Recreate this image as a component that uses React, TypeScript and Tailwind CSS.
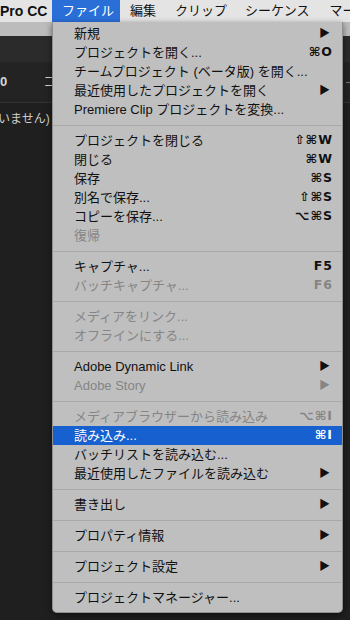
import React from 'react';

type Row =
  | { sep: true }
  | { label: string; shortcut?: string; arrow?: boolean; disabled?: boolean; active?: boolean; sep?: false };

const rows: Row[] = [
  { label: '新規', arrow: true },
  { label: 'プロジェクトを開く...', shortcut: '⌘O' },
  { label: 'チームプロジェクト (ベータ版) を開く...' },
  { label: '最近使用したプロジェクトを開く', arrow: true },
  { label: 'Premiere Clip プロジェクトを変換...' },
  { sep: true },
  { label: 'プロジェクトを閉じる', shortcut: '⇧⌘W' },
  { label: '閉じる', shortcut: '⌘W' },
  { label: '保存', shortcut: '⌘S' },
  { label: '別名で保存...', shortcut: '⇧⌘S' },
  { label: 'コピーを保存...', shortcut: '⌥⌘S' },
  { label: '復帰', disabled: true },
  { sep: true },
  { label: 'キャプチャ...', shortcut: 'F5' },
  { label: 'バッチキャプチャ...', shortcut: 'F6', disabled: true },
  { sep: true },
  { label: 'メディアをリンク...', disabled: true },
  { label: 'オフラインにする...', disabled: true },
  { sep: true },
  { label: 'Adobe Dynamic Link', arrow: true },
  { label: 'Adobe Story', arrow: true, disabled: true },
  { sep: true },
  { label: 'メディアブラウザーから読み込み', shortcut: '⌥⌘I', disabled: true },
  { label: '読み込み...', shortcut: '⌘I', active: true },
  { label: 'バッチリストを読み込む...' },
  { label: '最近使用したファイルを読み込む', arrow: true },
  { sep: true },
  { label: '書き出し', arrow: true },
  { sep: true },
  { label: 'プロパティ情報', arrow: true },
  { sep: true },
  { label: 'プロジェクト設定', arrow: true },
  { sep: true },
  { label: 'プロジェクトマネージャー...' },
];

const font = { fontFamily: '"Liberation Sans", "Noto Sans CJK JP", sans-serif' };

function MenuRow({ row }: { row: Row }) {
  if (row.sep) {
    return <div className="h-[12px] flex items-center"><div className="h-px w-full bg-[#a9a9a9]" /></div>;
  }
  const color = row.active ? 'bg-[#1760d0] text-white' : row.disabled ? 'text-[#858585]' : 'text-[#111]';
  return (
    <div className={`h-[19px] flex items-center pl-[21px] pr-[9px] text-[13px] leading-none ${color}`}>
      <span className="flex-1 whitespace-nowrap">{row.label}</span>
      {row.shortcut && (
        <span className="text-[12.5px] font-bold tracking-[1px]" style={{ fontFamily: '"DejaVu Sans", sans-serif' }}>
          {row.shortcut}
        </span>
      )}
      {row.arrow && <span className="text-[11px] pr-[3px]">▶</span>}
    </div>
  );
}

export default function App() {
  return (
    <div className="w-[350px] h-[620px] bg-[#1f1f1f] relative overflow-hidden" style={font}>
      <div className="h-[22px] bg-[#e4e4e4] flex items-center text-[13px] text-[#111] whitespace-nowrap">
        <span className="font-bold text-[14px] w-[52px] shrink-0">Pro CC</span>
        <span className="bg-[#2a6fd8] text-white h-full flex items-center px-[10px] w-[68px] shrink-0">ファイル</span>
        <span className="ml-[10px] shrink-0">編集</span>
        <span className="ml-[19px] shrink-0">クリップ</span>
        <span className="ml-[18px] shrink-0">シーケンス</span>
        <span className="ml-[20px] shrink-0">マーカー</span>
      </div>
      <div className="h-[14px] bg-[#bcbcbc]" />
      <div className="h-[26px] bg-[#2b2b2b]" />
      <div className="h-[40px] bg-[#232323] flex items-center text-[#d8d8d8] text-[13px]">
        <span className="font-bold">0</span>
        <span className="ml-[36px]">コ</span>
        <span className="ml-auto w-[4px] h-px bg-[#777]" />
      </div>
      <div className="h-px bg-[#333]" />
      <div className="h-[32px] bg-[#1f1f1f] flex items-center text-[#cfcfcf] text-[12px]">
        <span className="-ml-[2px]">いません)</span>
      </div>

      <div className="absolute left-[52px] top-[22px] w-[291px] h-[591px] bg-[#bfbfbf] border border-[#8e8e8e] border-t-0 rounded-b-[5px] pt-[2px] shadow-[0_2px_6px_rgba(0,0,0,0.5)]">
        {rows.map((r, i) => (
          <MenuRow key={i} row={r} />
        ))}
      </div>
    </div>
  );
}
